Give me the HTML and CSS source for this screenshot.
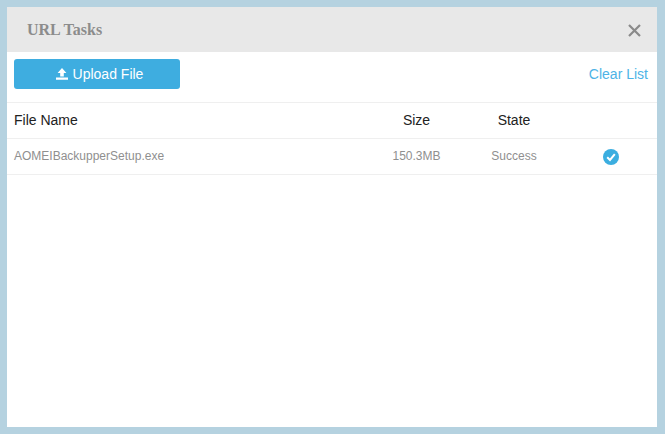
FILE: index.html
```html
<!DOCTYPE html>
<html lang="en">
<head>
<meta charset="utf-8">
<title>URL Tasks</title>
<link rel="stylesheet" href="styles.css">
</head>
<body>
<main class="dialog">
  <header class="dialog-head">
    <h1 class="dialog-title">URL Tasks</h1>
    <button class="close" type="button" aria-label="Close">
      <svg width="13" height="13" viewBox="0 0 13 13"><path d="M1 1 12 12M12 1 1 12" stroke="#8a8a8a" stroke-width="2.2" fill="none"/></svg>
    </button>
  </header>
  <div class="toolbar">
    <button class="upload" type="button">
      <svg width="12" height="12" viewBox="0 0 12 12"><path d="M6 0 10.4 5H7.8V8.4H4.2V5H1.6Z M0 9.6H12V11.8H0Z" fill="#fff"/></svg>
      <span>Upload File</span>
    </button>
    <a class="clear" href="#">Clear List</a>
  </div>
  <div class="row head-row">
    <div class="c-name">File Name</div>
    <div class="c-size">Size</div>
    <div class="c-state">State</div>
    <div class="c-icon"></div>
  </div>
  <div class="row data-row">
    <div class="c-name">AOMEIBackupperSetup.exe</div>
    <div class="c-size">150.3MB</div>
    <div class="c-state">Success</div>
    <div class="c-icon">
      <svg width="16" height="16" viewBox="0 0 16 16"><circle cx="8" cy="8" r="8" fill="#3baee0"/><path d="M4.2 8.2 7 11 11.8 5.2" stroke="#fff" stroke-width="2" fill="none"/></svg>
    </div>
  </div>
</main>
</body>
</html>
```
FILE: styles.css
```css
* { box-sizing: border-box; }
html, body { margin: 0; height: 100%; }
body {
  background: #b5d2e0;
  padding: 7px 8px 7px 7px;
  font-family: "Liberation Sans", Arial, sans-serif;
  overflow: hidden;
}
.dialog { width: 650px; height: 420px; background: #fff; }
.dialog-head {
  height: 45px;
  background: #e8e8e8;
  display: flex;
  align-items: center;
  justify-content: space-between;
  padding: 0 16px 0 20px;
}
.dialog-title {
  margin: 0;
  font: bold 16px "Liberation Serif", "Times New Roman", serif;
  color: #8c8c8c;
}
.close {
  border: 0;
  background: none;
  padding: 0;
  display: flex;
  margin-top: 1px;
}
.toolbar {
  height: 51px;
  padding: 7px 9px 0 7px;
  display: flex;
  justify-content: space-between;
  align-items: flex-start;
  border-bottom: 1px solid #efefef;
}
.upload {
  width: 166px;
  height: 30px;
  border: 0;
  border-radius: 3px;
  background: #3eade0;
  color: #fff;
  font: 14px "Liberation Sans", Arial, sans-serif;
  display: flex;
  align-items: center;
  justify-content: center;
  gap: 5px;
  padding: 0 0 0 5px;
}
.clear {
  color: #4db3e6;
  font-size: 14px;
  text-decoration: none;
  line-height: 16px;
  margin-top: 7px;
}
.row {
  height: 36px;
  display: flex;
  align-items: center;
  border-bottom: 1px solid #efefef;
  padding: 0 0 2px 7px;
}
.head-row { font-size: 14px; color: #222; }
.data-row { font-size: 12px; color: #8f8f8f; }
.c-name { width: 360px; }
.c-size { width: 85px; text-align: center; }
.c-state { width: 112px; text-align: center; margin-left: -1px; }
.c-icon { flex: 1; display: flex; justify-content: center; margin-left: -5px; padding-top: 2px; }
```
